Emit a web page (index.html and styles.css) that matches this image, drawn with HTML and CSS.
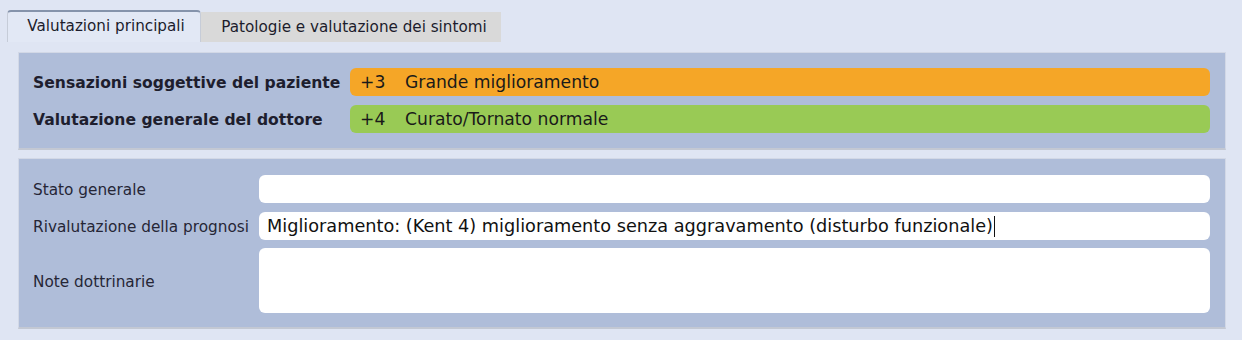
FILE: index.html
```html
<!DOCTYPE html>
<html lang="it">
<head>
<meta charset="utf-8">
<title>Valutazioni</title>
<link rel="stylesheet" href="styles.css">
</head>
<body>
<div class="tabs">
  <div class="tab active">Valutazioni principali</div>
  <div class="tab">Patologie e valutazione dei sintomi</div>
</div>
<section class="panel panel-top">
  <div class="row">
    <div class="blabel">Sensazioni soggettive del paziente</div>
    <div class="bar orange"><span class="num">+3</span><span>Grande miglioramento</span></div>
  </div>
  <div class="row">
    <div class="blabel">Valutazione generale del dottore</div>
    <div class="bar green"><span class="num">+4</span><span>Curato/Tornato normale</span></div>
  </div>
</section>
<section class="panel panel-bottom">
  <div class="frow">
    <div class="flabel">Stato generale</div>
    <div class="field"></div>
  </div>
  <div class="frow">
    <div class="flabel">Rivalutazione della prognosi</div>
    <div class="field"><span class="caret">Miglioramento: (Kent 4) miglioramento senza aggravamento (disturbo funzionale)</span></div>
  </div>
  <div class="frow tall">
    <div class="flabel">Note dottrinarie</div>
    <div class="field area"></div>
  </div>
</section>
</body>
</html>
```
FILE: styles.css
```css
html, body {
  margin: 0;
  padding: 0;
}
body {
  background: #dfe5f3;
  font-family: "DejaVu Sans", "Liberation Sans", sans-serif;
  color: #1c1c2c;
  width: 1242px;
  height: 340px;
  overflow: hidden;
}
.tabs {
  display: flex;
  align-items: flex-end;
  margin-top: 10px;
  padding-left: 7px;
  height: 32px;
}
.tab {
  box-sizing: border-box;
  font-size: 15.2px;
  display: flex;
  align-items: center;
  justify-content: center;
  white-space: nowrap;
}
.tab.active {
  width: 194px;
  height: 32px;
  background: #e2e8f5;
  border-top: 2px solid #8593ab;
  border-left: 1px solid #c6ccd8;
  border-right: 1px solid #c6ccd8;
  border-radius: 4px 4px 0 0;
  padding-bottom: 2px;
  padding-left: 4px;
}
.tab:not(.active) {
  width: 300px;
  height: 30px;
  background: #d9d9d9;
  padding-left: 6px;
}
.panel {
  box-sizing: border-box;
  margin-left: 18px;
  width: 1208px;
  background: #afbdd9;
  border: 1px solid #d2d8e6;
  border-bottom: 2px solid #c3c8d3;
}
.panel-top {
  margin-top: 10px;
  height: 98px;
  padding: 15px 15px 0 14px;
  display: flex;
  flex-direction: column;
  gap: 9px;
}
.row {
  display: flex;
  align-items: center;
  height: 28px;
}
.blabel {
  width: 317px;
  flex: none;
  font-weight: bold;
  font-size: 15.6px;
  color: #1e1e2e;
  white-space: nowrap;
  padding-top: 2px;
}
.bar {
  flex: 1;
  height: 28px;
  border-radius: 6px;
  display: flex;
  align-items: center;
  font-size: 17.2px;
  color: #1a1a1a;
  padding-left: 10px;
}
.bar .num {
  width: 45px;
}
.orange { background: #f5a627; }
.green { background: #99ca55; }
.panel-bottom {
  margin-top: 8px;
  height: 171px;
  padding: 16px 15px 0 14px;
  display: flex;
  flex-direction: column;
  gap: 9px;
}
.frow {
  display: flex;
  align-items: center;
  height: 28px;
}
.frow.tall {
  height: 65px;
  margin-top: -1px;
}
.flabel {
  width: 226px;
  flex: none;
  font-size: 15.3px;
  color: #262636;
  white-space: nowrap;
  padding-top: 2px;
}
.field {
  flex: 1;
  height: 100%;
  background: #ffffff;
  border-radius: 6px;
  display: flex;
  align-items: center;
  padding-left: 8px;
  font-size: 17.7px;
  color: #111;
}
.caret {
  border-right: 1px solid #111;
  padding-right: 1px;
  line-height: 21px;
}
```
